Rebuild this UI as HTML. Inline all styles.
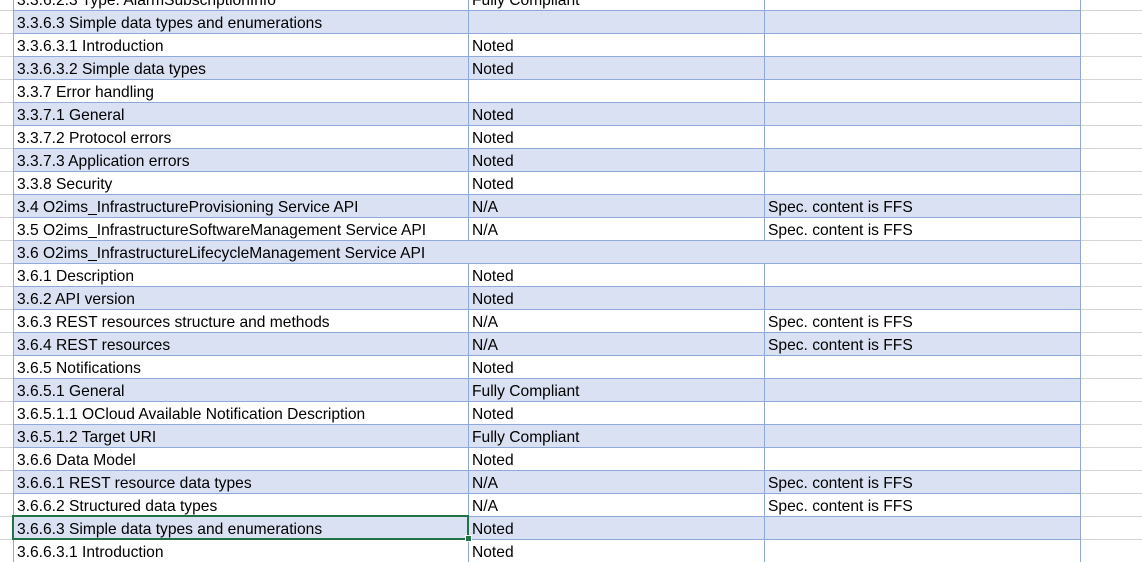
<!DOCTYPE html>
<html><head><meta charset="utf-8"><style>
body{margin:0;width:1142px;height:553px;overflow:hidden;background:#fff;position:relative;font-family:"Liberation Sans",sans-serif;font-size:15.6px;color:#000}
.g{position:absolute;left:0;width:1142px;height:1px;background:#d4d4d4}
.r{position:absolute;left:13px;width:1068px;height:22px;border-top:1px solid #8ea9db;display:flex}
.r.b{background:#d9e1f2}
.r div{height:22px;line-height:25px;padding-left:3px;box-sizing:border-box;white-space:nowrap;overflow:hidden;border-left:1px solid #8ea9db}
.c1{width:455px}.c2{width:296px}.c3{width:317px;border-right:1px solid #8ea9db}
.sel{position:absolute;left:12px;top:515px;width:453px;height:21px;border:2px solid #217346}
.h{position:absolute;left:465px;top:535px;width:5px;height:5px;background:#217346;border:1px solid #fff}
</style></head><body>
<div class="g" style="top:10px"></div><div class="g" style="top:33px"></div><div class="g" style="top:56px"></div><div class="g" style="top:79px"></div><div class="g" style="top:102px"></div><div class="g" style="top:125px"></div><div class="g" style="top:148px"></div><div class="g" style="top:171px"></div><div class="g" style="top:194px"></div><div class="g" style="top:217px"></div><div class="g" style="top:240px"></div><div class="g" style="top:263px"></div><div class="g" style="top:286px"></div><div class="g" style="top:309px"></div><div class="g" style="top:332px"></div><div class="g" style="top:355px"></div><div class="g" style="top:378px"></div><div class="g" style="top:401px"></div><div class="g" style="top:424px"></div><div class="g" style="top:447px"></div><div class="g" style="top:470px"></div><div class="g" style="top:493px"></div><div class="g" style="top:516px"></div><div class="g" style="top:539px"></div>
<div class="r" style="top:-13px"><div class="c1">3.3.6.2.3 Type: AlarmSubscriptionInfo</div><div class="c2">Fully Compliant</div><div class="c3"></div></div>
<div class="r b" style="top:10px"><div class="c1">3.3.6.3 Simple data types and enumerations</div><div class="c2"></div><div class="c3"></div></div>
<div class="r" style="top:33px"><div class="c1">3.3.6.3.1 Introduction</div><div class="c2">Noted</div><div class="c3"></div></div>
<div class="r b" style="top:56px"><div class="c1">3.3.6.3.2 Simple data types</div><div class="c2">Noted</div><div class="c3"></div></div>
<div class="r" style="top:79px"><div class="c1">3.3.7 Error handling</div><div class="c2"></div><div class="c3"></div></div>
<div class="r b" style="top:102px"><div class="c1">3.3.7.1 General</div><div class="c2">Noted</div><div class="c3"></div></div>
<div class="r" style="top:125px"><div class="c1">3.3.7.2 Protocol errors</div><div class="c2">Noted</div><div class="c3"></div></div>
<div class="r b" style="top:148px"><div class="c1">3.3.7.3 Application errors</div><div class="c2">Noted</div><div class="c3"></div></div>
<div class="r" style="top:171px"><div class="c1">3.3.8 Security</div><div class="c2">Noted</div><div class="c3"></div></div>
<div class="r b" style="top:194px"><div class="c1">3.4 O2ims_InfrastructureProvisioning Service API</div><div class="c2">N/A</div><div class="c3">Spec. content is FFS</div></div>
<div class="r" style="top:217px"><div class="c1">3.5 O2ims_InfrastructureSoftwareManagement Service API</div><div class="c2">N/A</div><div class="c3">Spec. content is FFS</div></div>
<div class="r b" style="top:240px"><div class="c1" style="overflow:visible;width:1068px;border-right:1px solid #8ea9db">3.6 O2ims_InfrastructureLifecycleManagement Service API</div></div>
<div class="r" style="top:263px"><div class="c1">3.6.1 Description</div><div class="c2">Noted</div><div class="c3"></div></div>
<div class="r b" style="top:286px"><div class="c1">3.6.2 API version</div><div class="c2">Noted</div><div class="c3"></div></div>
<div class="r" style="top:309px"><div class="c1">3.6.3 REST resources structure and methods</div><div class="c2">N/A</div><div class="c3">Spec. content is FFS</div></div>
<div class="r b" style="top:332px"><div class="c1">3.6.4 REST resources</div><div class="c2">N/A</div><div class="c3">Spec. content is FFS</div></div>
<div class="r" style="top:355px"><div class="c1">3.6.5 Notifications</div><div class="c2">Noted</div><div class="c3"></div></div>
<div class="r b" style="top:378px"><div class="c1">3.6.5.1 General</div><div class="c2">Fully Compliant</div><div class="c3"></div></div>
<div class="r" style="top:401px"><div class="c1">3.6.5.1.1 OCloud Available Notification Description</div><div class="c2">Noted</div><div class="c3"></div></div>
<div class="r b" style="top:424px"><div class="c1">3.6.5.1.2 Target URI</div><div class="c2">Fully Compliant</div><div class="c3"></div></div>
<div class="r" style="top:447px"><div class="c1">3.6.6 Data Model</div><div class="c2">Noted</div><div class="c3"></div></div>
<div class="r b" style="top:470px"><div class="c1">3.6.6.1 REST resource data types</div><div class="c2">N/A</div><div class="c3">Spec. content is FFS</div></div>
<div class="r" style="top:493px"><div class="c1">3.6.6.2 Structured data types</div><div class="c2">N/A</div><div class="c3">Spec. content is FFS</div></div>
<div class="r b" style="top:516px"><div class="c1">3.6.6.3 Simple data types and enumerations</div><div class="c2">Noted</div><div class="c3"></div></div>
<div class="r" style="top:539px"><div class="c1">3.6.6.3.1 Introduction</div><div class="c2">Noted</div><div class="c3"></div></div>
<div class="sel"></div><div class="h"></div>
</body></html>
